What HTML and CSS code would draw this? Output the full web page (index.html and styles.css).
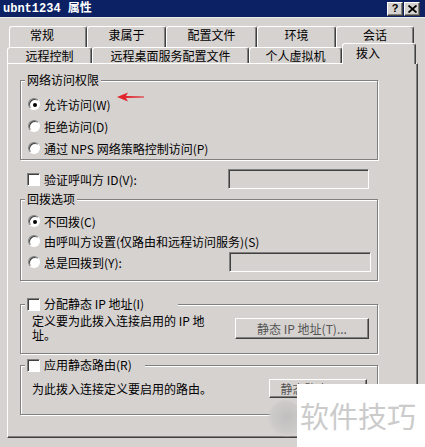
FILE: index.html
```html
<!DOCTYPE html>
<html lang="zh-CN">
<head>
<meta charset="utf-8">
<title>ubnt1234 属性</title>
<link rel="stylesheet" href="styles.css">
</head>
<body>
<div class="window">
  <div class="titlebar">
    <span class="title">ubnt1234 属性</span>
    <div class="tbtns">
      <span class="tbtn help">?</span>
      <span class="tbtn close">
        <svg width="9" height="8" viewBox="0 0 9 8"><path d="M0.5 0.5 L8.5 7.5 M8.5 0.5 L0.5 7.5" stroke="#000" stroke-width="1.8" fill="none"/></svg>
      </span>
    </div>
  </div>
  <div class="client">
    <div class="tabs">
      <div class="tabrow row1">
        <div class="tab w78 first">常规</div>
        <div class="tab w79">隶属于</div>
        <div class="tab w91">配置文件</div>
        <div class="tab w79">环境</div>
        <div class="tab w78">会话</div>
      </div>
      <div class="tabrow row2">
        <div class="tab w85">远程控制</div>
        <div class="tab w157">远程桌面服务配置文件</div>
        <div class="tab w93">个人虚拟机</div>
        <div class="tab selected">拨入</div>
      </div>
    </div>
    <div class="panel">
      <fieldset class="group g1">
        <legend>网络访问权限</legend>
        <div class="inner">
          <div class="opt"><span class="radio checked"></span><span>允许访问(W)</span></div>
          <div class="opt"><span class="radio"></span><span>拒绝访问(D)</span></div>
          <div class="opt"><span class="radio"></span><span>通过 NPS 网络策略控制访问(P)</span></div>
        </div>
      </fieldset>

      <div class="checkrow">
        <span class="check"></span><span class="lbl">验证呼叫方 ID(V):</span>
        <span class="field f1"></span>
      </div>

      <fieldset class="group g2">
        <legend>回拨选项</legend>
        <div class="inner">
          <div class="opt o1"><span class="radio checked"></span><span>不回拨(C)</span></div>
          <div class="opt o2"><span class="radio"></span><span>由呼叫方设置(仅路由和远程访问服务)(S)</span></div>
          <div class="opt o3"><span class="radio"></span><span class="lbl">总是回拨到(Y):</span><span class="field f2"></span></div>
        </div>
      </fieldset>

      <fieldset class="group g3">
        <legend class="chklegend l3"><span class="check"></span><span>分配静态 IP 地址(I)</span></legend>
        <div class="inner descrow">
          <p class="desc">定义要为此拨入连接启用的 IP 地<br>址。</p>
          <span class="btn b1">静态 IP 地址(T)...</span>
        </div>
      </fieldset>

      <fieldset class="group g4">
        <legend class="chklegend l4"><span class="check"></span><span>应用静态路由(R)</span></legend>
        <div class="inner descrow">
          <p class="desc one">为此拨入连接定义要启用的路由。</p>
          <span class="btn b2">静态路由(U)...</span>
        </div>
      </fieldset>
    </div>
  </div>

  <svg class="arrow" width="28" height="10" viewBox="0 0 28 10">
    <path d="M0 5 L11 0.5 L9 4 L27 4.6 L27 5.4 L9 6 L11 9.5 Z" fill="#e0262c"/>
  </svg>

  <div class="wm-ball"></div>
  <div class="watermark">软件技巧</div>
</div>
</body>
</html>
```

FILE: styles.css
```css
* { box-sizing: border-box; }
html, body { margin: 0; padding: 0; }
body {
  width: 425px;
  height: 447px;
  overflow: hidden;
  background: #d6d2d0;
  font-family: "Noto Sans CJK SC", "Liberation Sans", sans-serif;
  font-size: 12px;
  color: #000;
}
.window {
  position: relative;
  width: 425px;
  height: 447px;
  background: #d6d2d0;
}

/* title bar */
.titlebar {
  height: 18px;
  background: #0b2163;
  border-bottom: 1px solid #ecebea;
  display: flex;
  align-items: center;
  justify-content: space-between;
  padding: 0 5px 0 3px;
}
.title {
  color: #fff;
  font-family: "Liberation Mono", "Noto Sans CJK SC", monospace;
  font-weight: bold;
  font-size: 12px;
  line-height: 14px;
}
.tbtns { display: flex; gap: 1px; }
.tbtn {
  width: 16px;
  height: 14px;
  background: #d6d2d0;
  border-top: 1px solid #fff;
  border-left: 1px solid #fff;
  border-right: 1px solid #404040;
  border-bottom: 1px solid #404040;
  box-shadow: inset -1px -1px 0 #808080;
  display: flex;
  align-items: center;
  justify-content: center;
}
.help {
  font-family: "Liberation Sans", sans-serif;
  font-weight: bold;
  font-size: 11px;
  line-height: 11px;
}

/* tabs */
.client { padding-top: 8px; }
.tabs { height: 37px; display: flex; flex-direction: column; }
.tabrow { display: flex; }
.row1 { height: 21px; margin-left: 9px; }
.row2 { height: 16px; margin-left: 7px; }
.tab {
  border-top: 1px solid #fff;
  border-left: 1px solid #fff;
  border-right: 1px solid #404040;
  box-shadow: inset -1px 0 0 #808080;
  border-radius: 3px 3px 0 0;
  display: flex;
  justify-content: center;
  line-height: 16px;
  background: #d6d2d0;
}
.row1 .tab { height: 21px; padding-top: 0; }
.row1 .tab.first { padding-right: 12px; }
.row2 .tab { height: 16px; }
.w78 { width: 78px; }
.w79 { width: 79px; }
.w91 { width: 91px; }
.w85 { width: 85px; }
.w157 { width: 157px; }
.w93 { width: 93px; }
.tab.selected {
  width: 74px;
  height: 21px;
  margin-top: -4px;
  position: relative;
  z-index: 1;
  padding-top: 1px;
  padding-right: 22px;
}

/* panel */
.panel {
  margin-left: 7px;
  width: 411px;
  height: 375px;
  border-top: 1px solid #fff;
  border-left: 1px solid #fff;
  border-right: 1px solid #404040;
  border-bottom: 1px solid #404040;
  box-shadow: inset -1px -1px 0 #808080;
  padding: 9px 0 0 12px;
}

.group {
  margin: 0;
  padding: 0;
  width: 358px;
  min-inline-size: 0;
  border: 1px solid #808080;
  box-shadow: 1px 1px 0 #fff, inset 1px 1px 0 #fff;
}
.group legend {
  margin-left: 4px;
  padding: 0 2px;
  height: 14px;
  line-height: 14px;
  background: #d6d2d0;
}
.inner { padding-left: 7px; }

.opt {
  display: flex;
  align-items: center;
  height: 22px;
}
.radio {
  width: 12px;
  height: 12px;
  border-radius: 50%;
  background: #fff;
  border: 1px solid;
  border-color: #808080 #fff #fff #808080;
  box-shadow: inset 1px 1px 0 #404040;
  margin-right: 4px;
  display: flex;
  align-items: center;
  justify-content: center;
  flex: none;
}
.radio.checked::after {
  content: "";
  width: 4px;
  height: 4px;
  border-radius: 50%;
  background: #000;
  margin: 1px 0 0 1px;
}
.check {
  width: 13px;
  height: 13px;
  background: #fff;
  border: 1px solid;
  border-color: #808080 #fff #fff #808080;
  box-shadow: inset 1px 1px 0 #404040;
  flex: none;
}
.field {
  height: 20px;
  background: #d6d2d0;
  border: 1px solid;
  border-color: #808080 #fff #fff #808080;
  box-shadow: inset 1px 1px 0 #404040;
}

.g1 .inner { padding-top: 6px; }

.checkrow {
  display: flex;
  align-items: center;
  height: 20px;
  margin-top: 9px;
  padding-left: 7px;
}
.checkrow .check { margin-right: 4px; }
.checkrow .lbl { width: 184px; }
.f1 { width: 141px; }

.g2 { margin-top: 3px; }
.g2 .inner { padding-top: 5px; padding-bottom: 7px; }
.o1, .o2 { height: 20px; }
.o3 .lbl { width: 185px; }
.f2 { width: 142px; }

.chklegend {
  display: flex;
  align-items: center;
}
.chklegend .check { margin: 0 4px 0 0; }
.g3 .chklegend.l3 { width: 153px; padding: 0 2px; }
.g4 .chklegend.l4 { width: 120px; padding: 0 2px; }

.g3 { margin-top: 16px; }
.g4 { margin-top: 4px; }

.descrow {
  display: flex;
  justify-content: space-between;
  padding-left: 11px;
  padding-right: 8px;
}
.desc {
  margin: 0;
  line-height: 14px;
}
.g3 .descrow { padding-top: 3px; height: 42px; }
.g3 .btn { margin-top: 4px; }
.g4 .descrow { padding-top: 7px; height: 42px; padding-right: 10px; }
.desc.one { line-height: 19px; }

.btn {
  display: flex;
  align-items: center;
  justify-content: center;
  color: #555;
  border-top: 1px solid #fff;
  border-left: 1px solid #fff;
  border-right: 1px solid #404040;
  border-bottom: 1px solid #404040;
  box-shadow: inset -1px -1px 0 #808080;
}
.b1 { width: 134px; height: 21px; }
.b2 { width: 98px; height: 19px; }

/* annotation overlay */
.arrow {
  position: absolute;
  left: 117px;
  top: 92px;
}

/* watermark overlay */
.wm-ball {
  position: absolute;
  left: 268px;
  top: 400px;
  width: 34px;
  height: 38px;
  border-radius: 50%;
  background: radial-gradient(circle at 55% 45%, #c0bebe 0%, #cdcbca 55%, rgba(214,210,208,0) 72%);
}
.watermark {
  position: absolute;
  left: 297px;
  top: 384px;
  width: 128px;
  height: 63px;
  background: #fff;
  color: #cbcbcb;
  font-size: 29px;
  line-height: 30px;
  padding: 16px 0 0 3px;
  white-space: nowrap;
}
```
